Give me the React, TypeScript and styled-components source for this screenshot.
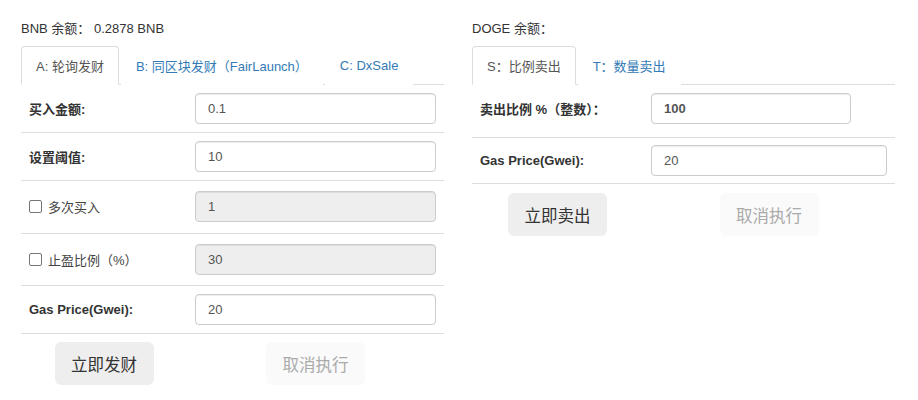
import React from 'react';
import styled, { createGlobalStyle } from 'styled-components';

const Global = createGlobalStyle`
  * { box-sizing: border-box; }
  body {
    margin: 0;
    background: #fff;
    font-family: "Liberation Sans", Arial, "Noto Sans CJK SC", sans-serif;
    font-size: 13px;
    color: #333;
  }
`;

const Page = styled.div`
  display: flex;
  gap: 28px;
  padding: 20px 0 0 21px;
`;

const Panel = styled.section`
  width: 423px;
  display: flex;
  flex-direction: column;
`;

const Balance = styled.div`
  height: 18px;
  line-height: 18px;
  margin-bottom: 8px;
`;

const Tabs = styled.ul`
  list-style: none;
  margin: 0;
  padding: 0;
  display: flex;
  gap: 2px;
  height: 39px;
  border-bottom: 1px solid #ddd;
`;

const Tab = styled.li<{ $active?: boolean }>`
  height: 39px;
  margin-bottom: -1px;
  padding: 0 14px;
  display: flex;
  align-items: center;
  border: 1px solid ${p => (p.$active ? '#ddd' : 'transparent')};
  border-bottom-color: transparent;
  border-radius: 4px 4px 0 0;
  background: #fff;
  color: ${p => (p.$active ? '#555' : '#337ab7')};
  white-space: nowrap;
  cursor: pointer;
`;

const Row = styled.div<{ $cols: string; $pad?: string }>`
  display: grid;
  grid-template-columns: ${p => p.$cols};
  align-items: center;
  padding: ${p => p.$pad || '8px 0'};
  border-bottom: 1px solid #ddd;
`;

const Label = styled.label<{ $bold?: boolean }>`
  padding: 0 8px;
  font-weight: ${p => (p.$bold ? 700 : 400)};
  color: ${p => (p.$bold ? '#333' : '#444')};
  display: flex;
  align-items: center;
  white-space: nowrap;
`;

const Field = styled.div`
  padding: 0 8px;
`;

const Input = styled.input<{ $width?: number; $bold?: boolean }>`
  display: block;
  width: ${p => (p.$width ? `${p.$width}px` : '100%')};
  height: 31px;
  padding: 0 12px;
  border: 1px solid #ccc;
  border-radius: 4px;
  box-shadow: inset 0 1px 1px rgba(0, 0, 0, 0.075);
  font-family: inherit;
  font-size: 13px;
  font-weight: ${p => (p.$bold ? 700 : 400)};
  color: #555;
  background: #fff;
  &:disabled {
    background: #eee;
    opacity: 1;
  }
`;

const Check = styled.input`
  appearance: none;
  width: 13px;
  height: 13px;
  margin: 0 6px 0 0;
  border: 1px solid #767676;
  border-radius: 2px;
  background: #fff;
`;

const Actions = styled.div<{ $cols: string; $top?: number }>`
  display: grid;
  grid-template-columns: ${p => p.$cols};
  padding-top: ${p => p.$top ?? 8}px;
`;

const Button = styled.button<{ $muted?: boolean }>`
  justify-self: center;
  width: 99px;
  height: 43px;
  border: none;
  border-radius: 6px;
  background: ${p => (p.$muted ? '#fafafa' : '#eee')};
  color: ${p => (p.$muted ? '#aaa' : '#333')};
  font-family: inherit;
  font-size: 16.5px;
  cursor: pointer;
`;

const LEFT = '166px 1fr';
const RIGHT = '171px 1fr';

export default function App() {
  return (
    <>
      <Global />
      <Page>
        <Panel>
          <Balance>BNB 余额： 0.2878 BNB</Balance>
          <Tabs>
            <Tab $active>A: 轮询发财</Tab>
            <Tab>B: 同区块发财（FairLaunch）</Tab>
            <Tab>C: DxSale</Tab>
          </Tabs>
          <Row $cols={LEFT}>
            <Label $bold>买入金额:</Label>
            <Field><Input defaultValue="0.1" /></Field>
          </Row>
          <Row $cols={LEFT}>
            <Label $bold>设置阈值:</Label>
            <Field><Input defaultValue="10" /></Field>
          </Row>
          <Row $cols={LEFT} $pad="10px 0 11px">
            <Label><Check type="checkbox" />多次买入</Label>
            <Field><Input defaultValue="1" disabled /></Field>
          </Row>
          <Row $cols={LEFT} $pad="10px 0 10px">
            <Label><Check type="checkbox" />止盈比例（%）</Label>
            <Field><Input defaultValue="30" disabled /></Field>
          </Row>
          <Row $cols={LEFT}>
            <Label $bold>Gas Price(Gwei):</Label>
            <Field><Input defaultValue="20" /></Field>
          </Row>
          <Actions $cols={LEFT}>
            <Button>立即发财</Button>
            <Button $muted>取消执行</Button>
          </Actions>
        </Panel>
        <Panel>
          <Balance>DOGE 余额：</Balance>
          <Tabs>
            <Tab $active>S：比例卖出</Tab>
            <Tab>T：数量卖出</Tab>
          </Tabs>
          <Row $cols={RIGHT} $pad="8px 0 13px">
            <Label $bold>卖出比例 %（整数）：</Label>
            <Field><Input defaultValue="100" $width={200} $bold /></Field>
          </Row>
          <Row $cols={RIGHT} $pad="7px 0 7px">
            <Label $bold>Gas Price(Gwei):</Label>
            <Field><Input defaultValue="20" /></Field>
          </Row>
          <Actions $cols={RIGHT} $top={9}>
            <Button>立即卖出</Button>
            <Button $muted>取消执行</Button>
          </Actions>
        </Panel>
      </Page>
    </>
  );
}
